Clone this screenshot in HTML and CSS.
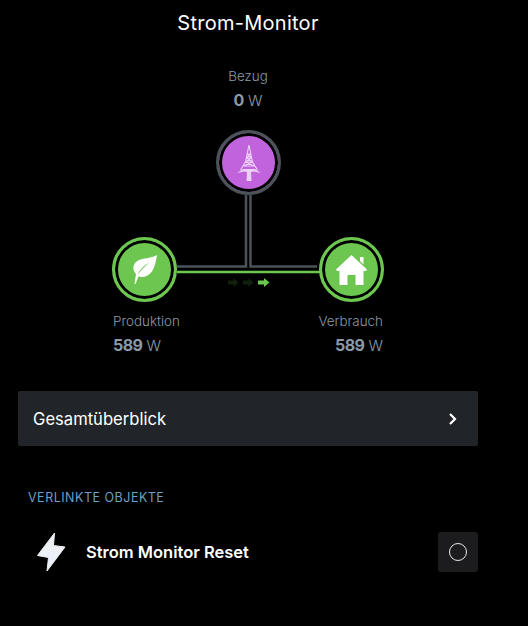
FILE: index.html
```html
<!DOCTYPE html>
<html lang="de">
<head>
<meta charset="utf-8">
<title>Strom-Monitor</title>
<link rel="stylesheet" href="styles.css">
</head>
<body>
<div class="page">
  <h1 class="title">Strom-Monitor</h1>
  <div class="diagram">
    <svg class="wires" width="528" height="340" viewBox="0 0 528 340">
      <path class="wire" d="M246 154V225.500H177"/>
      <path class="wire" d="M250.500 154V225.500H317"/>
      <path class="wire-on" d="M177 231H320"/>
      <path class="arrow dim" d="M228 239.500h5.500v-2.500l5 4.500-5 4.500v-2.500h-5.500z"/>
      <path class="arrow dim" d="M243 239.500h5.500v-2.500l5 4.500-5 4.500v-2.500h-5.500z"/>
      <path class="arrow" d="M258 239.500h6v-2.500l5.500 4.500-5.500 4.500v-2.500h-6z"/>
    </svg>

    <div class="stat stat-grid">
      <span class="label">Bezug</span>
      <span class="value"><b>0</b> W</span>
    </div>
    <div class="node node-grid">
      <svg viewBox="0 0 24 36" width="24" height="36">
        <path class="tower-frame" d="M12 0 8.500 17 3.500 25M12 0 15.500 17 20.500 25M10.500 9H13.500M9.500 13H14.500M8.500 17H15.500M6.500 21H17.500M10.500 9 14.500 13 8.500 17 17.500 21M13.500 9 9.500 13 15.500 17 6.500 21"/>
        <path class="tower-base" d="M0 28 6 24H18L24 28 17 26.500 14 27 14.500 36H9.500L10 27 7 26.500Z"/>
      </svg>
    </div>

    <div class="node node-solar">
      <svg viewBox="0 0 25 29" width="25" height="29">
        <path d="M25 0C24 6 23 12 20 16.500 17 21 11 23 6.500 21.500L3.500 29H2.500L4 19C.5 15 0 9 6 5.500 11 3 19 3.500 25 0ZM17 7.500C12 10.500 7.500 15 5.500 20 8.500 15.500 13 11.500 17 7.500Z" fill="#fff" fill-rule="evenodd"/>
      </svg>
    </div>
    <div class="stat stat-solar">
      <span class="label">Produktion</span>
      <span class="value"><b>589</b> W</span>
    </div>

    <div class="node node-home">
      <svg viewBox="0 0 32 30" width="32" height="30">
        <path d="M15.500 0 31 14.500 30 16H27.500V30H19.500V20H11.500V30H3.500V16H1L0 14.500Z" fill="#fff"/>
        <path d="M24 2H27.500V9.500L24 6Z" fill="#fff"/>
      </svg>
    </div>
    <div class="stat stat-home">
      <span class="label">Verbrauch</span>
      <span class="value"><b>589</b> W</span>
    </div>
  </div>

  <a class="overview">
    <span>Gesamtüberblick</span>
    <svg viewBox="0 0 10 14" width="10" height="14"><path d="M2 2l5 5-5 5" fill="none" stroke="#fff" stroke-width="2.200"/></svg>
  </a>

  <h2 class="section">VERLINKTE OBJEKTE</h2>
  <div class="row">
    <svg class="bolt" viewBox="0 0 30 40" width="30" height="40"><path d="M18.500 1 1.500 23.500 12.500 25.500 11 39 29 15 17.500 13.500Z" fill="#eef0f8" stroke="#eef0f8" stroke-linejoin="round"/></svg>
    <span class="row-name">Strom Monitor Reset</span>
    <button class="toggle"><span class="ring"></span></button>
  </div>
</div>
</body>
</html>
```
FILE: styles.css
```css
* { box-sizing: border-box; }
html, body { margin: 0; background: #000; }
body { font-family: "Inter", "Liberation Sans", sans-serif; color: #fff; }
.page { width: 528px; height: 626px; overflow: hidden; }
.title { margin: 0; width: 496px; padding-top: 11px; height: 41px; text-align: center; font-size: 20px; line-height: 24px; font-weight: 400; letter-spacing: .27px; }
.diagram { position: relative; height: 350px; }
.wires { position: absolute; left: 0; top: 0; }
.wire { fill: none; stroke: #4b5359; stroke-width: 2.500; }
.wire-on { fill: none; stroke: #6cc64f; stroke-width: 2.600; }
.arrow { fill: #6cc64f; }
.arrow.dim { opacity: .16; }
.node { position: absolute; width: 65px; height: 65px; border-radius: 50%; border: 3px solid #6cc64f; background: #6cc64f; box-shadow: inset 0 0 0 3px #000; display: flex; align-items: center; justify-content: center; }
.node-grid { left: 216px; top: 89px; background: #c063dd; border-color: #4b5359; }
.node-solar { left: 112px; top: 196px; }
.node-home { left: 319px; top: 196px; }
.tower-frame { fill: none; stroke: #ecd0f5; stroke-width: 1.100; }
.tower-base { fill: #ecd0f5; }
.stat { position: absolute; display: flex; flex-direction: column; color: #8c99a8; }
.label { font-size: 13.400px; line-height: 18px; font-weight: 300; }
.value { font-size: 15px; line-height: 20px; margin-top: 5px; font-weight: 300; }
.value b { font-weight: 700; font-size: 16px; letter-spacing: -.6px; }
.stat-grid { left: 148px; width: 200px; top: 26px; align-items: center; }
.stat-solar { left: 113px; top: 271px; }
.stat-home { right: 145px; top: 271px; align-items: flex-end; }
.overview { display: flex; align-items: center; justify-content: space-between; margin-left: 18px; width: 460px; height: 55px; padding: 0 20px 0 15px; background: #212529; border-radius: 2px; font-size: 16.600px; font-weight: 400; }
.section { margin: 0; padding: 43px 0 0 28px; font-size: 12.500px; line-height: 18px; font-weight: 400; color: #6f9fc4; letter-spacing: .5px; }
.row { display: flex; align-items: center; margin: 25px 50px 0 36px; height: 40px; }
.bolt { flex: none; }
.row-name { margin-left: 20px; font-size: 16.500px; font-weight: 600; flex: 1; }
.toggle { width: 40px; height: 40px; padding: 0; border: 0; border-radius: 3px; background: #1c1c1e; display: flex; align-items: center; justify-content: center; }
.ring { width: 18px; height: 18px; border-radius: 50%; border: 1.800px solid #e8e8ea; }
```
